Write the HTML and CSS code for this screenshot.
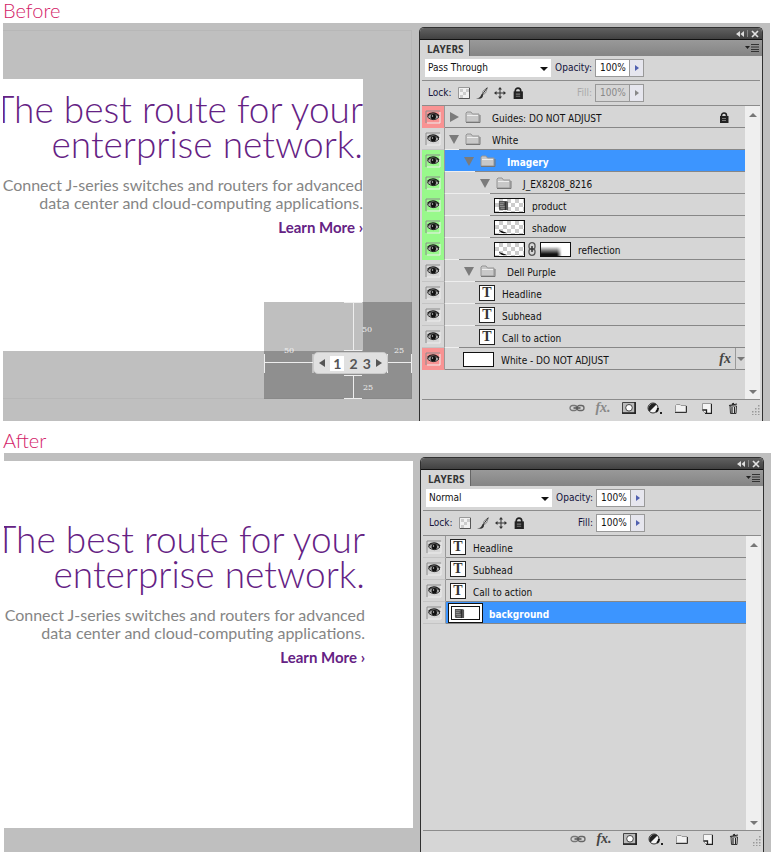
FILE: index.html
```html
<!DOCTYPE html>
<html lang="en">
<head>
<meta charset="utf-8">
<title>Layers: before and after</title>
<link rel="stylesheet" href="styles.css">
</head>
<body>
<svg class="sprite" aria-hidden="true">
  <symbol id="eye" viewBox="0 0 16 14"><path d="M1 13V1h14" fill="none" stroke="#8d8d8d"/><path d="M2 13h13V2" fill="none" stroke="#eee"/><path d="M2.500 7C4 3.500 10 2.500 14 7c-3 3.500-8 3.500-11.500 0z" fill="#aaa" stroke="#333"/><path d="M2.500 5.500C5 2 11 2 14 6" fill="none" stroke="#222" stroke-width="1.300"/><circle cx="8.300" cy="6.800" r="2.700" fill="#111"/><circle cx="7.500" cy="6" r=".7" fill="#ddd"/></symbol>
  <symbol id="folder" viewBox="0 0 16 12"><path d="M1 11V2l1-1h4l1.500 2H14v8z" fill="#c8c8c8" stroke="#959595"/><path d="M2 4.500h11" stroke="#eee"/><path d="M1 11.500h14V4" fill="none" stroke="#777"/></symbol>
  <symbol id="down" viewBox="0 0 10 10"><path d="M0 1h10L5 10z" fill="#7b7b7b"/></symbol>
  <symbol id="right" viewBox="0 0 10 10"><path d="M1 0v10l9-5z" fill="#7b7b7b"/></symbol>
  <symbol id="lock" viewBox="0 0 10 11"><path d="M2.500 5V3.500a2.500 2.500 0 0 1 5 0V5" fill="none" stroke="#222" stroke-width="1.500"/><rect x="1" y="4" width="8.500" height="7" fill="#222"/><path d="M3 6.500h4M3 8.500h4" stroke="#777"/></symbol>
  <symbol id="pixels" viewBox="0 0 12 12"><path d="M.5.5h11v11H.5z" fill="#f1f1f1" stroke="#999"/><path d="M2 2h3v3H2zM5 5h3v3H5zM8 2h3v3H8zM2 8h3v3H2z" fill="#ccc"/><path d="M1 11.500h10.500V1" fill="none" stroke="#555"/></symbol>
  <symbol id="brush" viewBox="0 0 12 12"><path d="M11.500.5 9.500 6 6 8.500 7 4z" fill="#eee" stroke="#777" stroke-width=".8"/><path d="M11 1 6 8" stroke="#333"/><path d="M6.500 7C5 7 5 9 4 10s-2 1-4 1c4 1.500 7 .5 7-2.500z" fill="#333"/></symbol>
  <symbol id="move" viewBox="0 0 12 12"><path d="M6 1v10M1 6h10" stroke="#333"/><path d="M6 0 4 2.500h4zM6 12 4 9.500h4zM0 6l2.500-2v4zM12 6 9.500 4v4z" fill="#333"/></symbol>
  <symbol id="link" viewBox="0 0 16 8"><rect x="1" y="1.500" width="7" height="5" rx="2.500" fill="none" stroke="#777" stroke-width="1.300"/><rect x="8" y="1.500" width="7" height="5" rx="2.500" fill="none" stroke="#666" stroke-width="1.300"/><path d="M4.500 4h7" stroke="#555" stroke-width="1.500"/></symbol>
  <symbol id="chain" viewBox="0 0 8 14"><rect x="1" y=".7" width="6" height="7" rx="3" fill="none" stroke="#555" stroke-width="1.300"/><rect x="1" y="6.300" width="6" height="7" rx="3" fill="none" stroke="#555" stroke-width="1.300"/><path d="M4 4v6" stroke="#333" stroke-width="1.500"/></symbol>
  <symbol id="mask" viewBox="0 0 14 12"><path d="M.5.5h13v11H.5z" fill="#bbb" stroke="#444"/><path d="M0 11h14M13 0v12" stroke="#222" stroke-width="1.500"/><circle cx="7" cy="5.800" r="3.300" fill="#fff" stroke="#444"/></symbol>
  <symbol id="adjust" viewBox="0 0 16 13"><circle cx="6" cy="6" r="5" fill="#f4f4f4" stroke="#333"/><path d="M2.500 9.500A5 5 0 0 1 9.500 2.500z" fill="#222"/><path d="M9 10a5 5 0 0 0 2-4" fill="none" stroke="#111" stroke-width="2"/><path d="M13 10h2v2h-2z" fill="#222"/></symbol>
  <symbol id="group" viewBox="0 0 12 9"><path d="M.5 8V1.500l1-1H5l1 1h5V8z" fill="#f1f1f1" stroke="#999"/><path d="M0 8.500h11.500V2" fill="none" stroke="#333"/></symbol>
  <symbol id="new" viewBox="0 0 10 11"><path d="M.5.500h9v10H3.500L.5 7.500z" fill="#f5f5f5" stroke="#999"/><path d="M3 10.500h6.500V1M.5 7h4v3" fill="none" stroke="#222" stroke-width="1.300"/></symbol>
  <symbol id="trash" viewBox="0 0 10 12"><path d="M2 4h6.500L8 11.500H2.500z" fill="#eee" stroke="#333"/><path d="M1 3.500 9 2M4 2l2-.8M4 5v6M6.500 5v6" fill="none" stroke="#222" stroke-width="1.200"/></symbol>
  <symbol id="grip" viewBox="0 0 10 10"><path d="M8 0h1.500v1.500H8zM8 3h1.500v1.500H8zM8 6h1.500v1.500H8zM8 9h1.500v1H8zM5 3h1.500v1.500H5zM5 6h1.500v1.500H5zM5 9h1.500v1H5zM2 6h1.500v1.500H2zM2 9h1.500v1H2z" fill="#999"/></symbol>
  <symbol id="collapse" viewBox="0 0 8 6"><path d="M4 0v6L0 3zM8 0v6L4.500 3z" fill="#ddd"/></symbol>
  <symbol id="close" viewBox="0 0 8 8"><path d="m1 1 6 6M7 1 1 7" stroke="#e2e2e2" stroke-width="1.700"/></symbol>
  <symbol id="menu" viewBox="0 0 14 8"><path d="M0 2h5L2.500 5z" fill="#222"/><path d="M6 .5h8M6 3h8M6 5.500h8M6 7.500h8" stroke="#333"/></symbol>
  <symbol id="device" viewBox="0 0 12 12"><path d="M1 1h8l2 1v9H2L1 10z" fill="#555"/><path d="M2 3h5M2 5h4M2 7h6M3 9h5" stroke="#999"/><path d="M8 2v9" stroke="#222"/></symbol>
  <symbol id="streak" viewBox="0 0 12 4"><path d="M1 0c2 1 6 2 8 3H4C3 2 1 1 1 0z" fill="#111"/></symbol>
</svg>

<section>
  <h2 class="caption">Before</h2>
  <div class="workspace">
    <div class="canvas">
      <div class="banner framed">
        <div class="ad inset">
          <h1>The best route for your<br>enterprise network.</h1>
          <p>Connect J-series switches and routers for advanced<br>data center and cloud-computing applications.</p>
          <a href="#more">Learn More ›</a>
        </div>
        <div class="spacing">
          <svg viewBox="0 0 148 97" aria-hidden="true">
            <path d="M80 .5h18M89.500 1v47M80 48.500h18M80 73.500h18M89.500 74v22M80 96.500h18M.5 52v19M1 60.500h48M49 52v19M123.500 52v19M124 60.500h23M147.500 52v19" fill="none" stroke="#eee"/>
            <text x="98" y="30">50</text><text x="20" y="51">50</text><text x="130" y="51">25</text><text x="99" y="88">25</text>
          </svg>
          <nav class="pager" aria-label="Slides"><a href="#prev" aria-label="Previous"><i class="prev"></i></a><a href="#1" class="current">1</a><a href="#2">2</a><a href="#3">3</a><a href="#next" aria-label="Next"><i class="next"></i></a></nav>
        </div>
      </div>
    </div>
    <div class="panel">
      <div class="titlebar"><button aria-label="Collapse"><svg class="i-collapse"><use href="#collapse"/></svg></button><i></i><button aria-label="Close"><svg class="i-close"><use href="#close"/></svg></button></div>
      <div class="tabs"><button class="tab">LAYERS</button><button class="plain" aria-label="Panel menu"><svg class="i-menu"><use href="#menu"/></svg></button></div>
      <div class="options">
        <div class="picker"><select aria-label="Blend mode"><option>Pass Through</option></select></div>
        <label for="o1">Opacity:</label>
        <span class="amount"><input id="o1" value="100%"><button aria-label="Opacity slider"><i class="next"></i></button></span>
      </div>
      <div class="options">
        <div class="locks"><span>Lock:</span><button aria-label="Lock transparency"><svg><use href="#pixels"/></svg></button><button aria-label="Lock pixels"><svg><use href="#brush"/></svg></button><button aria-label="Lock position"><svg><use href="#move"/></svg></button><button aria-label="Lock all"><svg><use href="#lock"/></svg></button></div>
        <label for="f1" class="off">Fill:</label>
        <span class="amount off"><input id="f1" value="100%" disabled><button aria-label="Fill slider" disabled><i class="next"></i></button></span>
      </div>
      <div class="body">
        <ul class="layers">
          <li class="red"><button class="eye" aria-label="Visibility"><svg><use href="#eye"/></svg></button><div class="row d0"><svg class="tri"><use href="#right"/></svg><svg class="folder"><use href="#folder"/></svg><span>Guides: DO NOT ADJUST</span><svg class="locked"><use href="#lock"/></svg></div></li>
          <li><button class="eye" aria-label="Visibility"><svg><use href="#eye"/></svg></button><div class="row d0 r1"><svg class="tri"><use href="#down"/></svg><svg class="folder"><use href="#folder"/></svg><span>White</span></div></li>
          <li class="green"><button class="eye" aria-label="Visibility"><svg><use href="#eye"/></svg></button><div class="row d1 r2 selected"><svg class="tri"><use href="#down"/></svg><svg class="folder"><use href="#folder"/></svg><span>Imagery</span></div></li>
          <li class="green"><button class="eye" aria-label="Visibility"><svg><use href="#eye"/></svg></button><div class="row d2 r3"><svg class="tri"><use href="#down"/></svg><svg class="folder"><use href="#folder"/></svg><span>J_EX8208_8216</span></div></li>
          <li class="green"><button class="eye" aria-label="Visibility"><svg><use href="#eye"/></svg></button><div class="row d3 r3"><i class="thumb checks"><svg class="device"><use href="#device"/></svg></i><span>product</span></div></li>
          <li class="green"><button class="eye" aria-label="Visibility"><svg><use href="#eye"/></svg></button><div class="row d3 r3"><i class="thumb checks low"><svg class="streak"><use href="#streak"/></svg></i><span>shadow</span></div></li>
          <li class="green"><button class="eye" aria-label="Visibility"><svg><use href="#eye"/></svg></button><div class="row d3 r1"><i class="thumb checks low"><svg class="streak"><use href="#streak"/></svg></i><svg class="chain"><use href="#chain"/></svg><i class="thumb fade"></i><span>reflection</span></div></li>
          <li><button class="eye" aria-label="Visibility"><svg><use href="#eye"/></svg></button><div class="row d1 r2"><svg class="tri"><use href="#down"/></svg><svg class="folder"><use href="#folder"/></svg><span>Dell Purple</span></div></li>
          <li><button class="eye" aria-label="Visibility"><svg><use href="#eye"/></svg></button><div class="row dt r2"><b class="type">T</b><span>Headline</span></div></li>
          <li><button class="eye" aria-label="Visibility"><svg><use href="#eye"/></svg></button><div class="row dt r2"><b class="type">T</b><span>Subhead</span></div></li>
          <li><button class="eye" aria-label="Visibility"><svg><use href="#eye"/></svg></button><div class="row dt r1"><b class="type">T</b><span>Call to action</span></div></li>
          <li class="red"><button class="eye" aria-label="Visibility"><svg><use href="#eye"/></svg></button><div class="row dw"><i class="thumb"></i><span>White - DO NOT ADJUST</span><em class="fx">fx</em><button class="more" aria-label="Show effects"><i class="drop"></i></button></div></li>
        </ul>
        <div class="scroll"><i class="up"></i><i class="drop"></i></div>
      </div>
      <div class="actions"><button aria-label="Link layers"><svg class="i-link"><use href="#link"/></svg></button><button class="fx dim" aria-label="Layer style">fx.</button><button aria-label="Add mask"><svg class="i-mask"><use href="#mask"/></svg></button><button aria-label="Adjustment layer"><svg class="i-adjust"><use href="#adjust"/></svg></button><button aria-label="New group"><svg class="i-group"><use href="#group"/></svg></button><button aria-label="New layer"><svg class="i-new"><use href="#new"/></svg></button><button aria-label="Delete layer"><svg class="i-trash"><use href="#trash"/></svg></button><svg class="i-grip"><use href="#grip"/></svg></div>
    </div>
  </div>
</section>

<section>
  <h2 class="caption second">After</h2>
  <div class="workspace shifted">
    <div class="canvas">
      <div class="banner">
        <div class="ad">
          <h1>The best route for your<br>enterprise network.</h1>
          <p>Connect J-series switches and routers for advanced<br>data center and cloud-computing applications.</p>
          <a href="#more">Learn More ›</a>
        </div>
      </div>
    </div>
    <div class="panel">
      <div class="titlebar"><button aria-label="Collapse"><svg class="i-collapse"><use href="#collapse"/></svg></button><i></i><button aria-label="Close"><svg class="i-close"><use href="#close"/></svg></button></div>
      <div class="tabs"><button class="tab">LAYERS</button><button class="plain" aria-label="Panel menu"><svg class="i-menu"><use href="#menu"/></svg></button></div>
      <div class="options">
        <div class="picker"><select aria-label="Blend mode"><option>Normal</option></select></div>
        <label for="o2">Opacity:</label>
        <span class="amount"><input id="o2" value="100%"><button aria-label="Opacity slider"><i class="next"></i></button></span>
      </div>
      <div class="options">
        <div class="locks"><span>Lock:</span><button aria-label="Lock transparency"><svg><use href="#pixels"/></svg></button><button aria-label="Lock pixels"><svg><use href="#brush"/></svg></button><button aria-label="Lock position"><svg><use href="#move"/></svg></button><button aria-label="Lock all"><svg><use href="#lock"/></svg></button></div>
        <label for="f2">Fill:</label>
        <span class="amount"><input id="f2" value="100%"><button aria-label="Fill slider"><i class="next"></i></button></span>
      </div>
      <div class="body">
        <ul class="layers">
          <li><button class="eye" aria-label="Visibility"><svg><use href="#eye"/></svg></button><div class="row d0"><b class="type">T</b><span>Headline</span></div></li>
          <li><button class="eye" aria-label="Visibility"><svg><use href="#eye"/></svg></button><div class="row d0"><b class="type">T</b><span>Subhead</span></div></li>
          <li><button class="eye" aria-label="Visibility"><svg><use href="#eye"/></svg></button><div class="row d0"><b class="type">T</b><span>Call to action</span></div></li>
          <li><button class="eye" aria-label="Visibility"><svg><use href="#eye"/></svg></button><div class="row framed-thumb selected"><i class="thumb active"><svg class="device"><use href="#device"/></svg></i><span>background</span></div></li>
        </ul>
        <div class="scroll"><i class="up"></i><i class="drop"></i></div>
      </div>
      <div class="actions"><button aria-label="Link layers"><svg class="i-link"><use href="#link"/></svg></button><button class="fx" aria-label="Layer style">fx.</button><button aria-label="Add mask"><svg class="i-mask"><use href="#mask"/></svg></button><button aria-label="Adjustment layer"><svg class="i-adjust"><use href="#adjust"/></svg></button><button aria-label="New group"><svg class="i-group"><use href="#group"/></svg></button><button aria-label="New layer"><svg class="i-new"><use href="#new"/></svg></button><button aria-label="Delete layer"><svg class="i-trash"><use href="#trash"/></svg></button><svg class="i-grip"><use href="#grip"/></svg></div>
    </div>
  </div>
</section>
</body>
</html>
```
FILE: styles.css
```css
* { box-sizing: border-box; }
body { margin: 0; background: #fff; color: #111; font: 10px/14px "DejaVu Sans Condensed", "DejaVu Sans", sans-serif; }
button, input, select { font: inherit; color: inherit; margin: 0; padding: 0; border: 0; background: none; border-radius: 0; }
button { display: flex; align-items: center; justify-content: center; }
svg { display: block; flex: none; }
.sprite { position: absolute; width: 0; height: 0; }

.caption { margin: 0; padding-left: 3px; color: #d31c68; font: 300 20px/21px Lato, sans-serif; height: 23px; }
.caption.second { padding-top: 9px; height: 32px; }

/* workspace */
.workspace { display: grid; grid-template-columns: minmax(0, 416fr) minmax(0, 344fr); min-height: 398px; margin: 0 3px; padding-right: 7px; background: #bfbfbf; }
.workspace.shifted { margin: 0 2px 0 4px; min-height: 399px; }
.canvas { display: flex; padding: 7px 7px 22px 0; }
.shifted .canvas { padding: 8px 7px 24px 0; }
.banner { position: relative; flex: 1; min-width: 0; background: #fff; }
.banner.framed { background: none; border: 1px solid #b7b7b7; border-left: 0; padding: 48px 48px 47px 0; display: flex; }
.ad { display: flex; flex-direction: column; align-items: flex-end; flex: 1; min-width: 0; overflow: hidden; background: #fff; text-align: right; white-space: nowrap; padding-top: 12px; }
.shifted .ad { padding: 60px 48px 0 0; background: none; }
.ad h1 { margin: 0; color: #652284; font: 300 37px/35px Lato, sans-serif; }
.ad p { margin: 15px 0 0; color: #858585; font: 400 16px/18px Lato, sans-serif; }
.ad a { margin-top: 6px; color: #652284; font: 700 15px/18px Lato, sans-serif; text-decoration: none; }

/* spacing overlay on the banner's corner */
.spacing { position: absolute; right: -1px; bottom: -1px; width: 148px; height: 97px; background: rgba(0, 0, 0, .25); }
.spacing text { fill: #f0f0f0; font: 8px "DejaVu Serif", serif; }
.pager { position: absolute; left: 49px; top: 50px; width: 75px; height: 22px; display: flex; align-items: center; justify-content: space-between; padding: 0 5px; background: #e0e0e0; border: 1px solid #cacaca; border-radius: 5px; }
.pager a { color: #555; font: 700 14px/15px Lato, sans-serif; text-decoration: none; }
.pager .current { background: #fff; padding: 0 3px; }
.prev { display: block; border: 4px solid transparent; border-right: 6px solid #555; border-left: 0; }
.next { display: block; border: 4px solid transparent; border-left: 6px solid #555; border-right: 0; }
.up { border: 4px solid transparent; border-bottom: 4px solid #777; border-top: 0; }
.drop { border: 4px solid transparent; border-top: 4px solid #777; border-bottom: 0; }

/* panel */
.panel { display: flex; flex-direction: column; margin-top: 4px; padding: 0 2px; background: #d6d6d6; border: solid #303030; border-width: 1px 1px 0; border-radius: 5px 5px 0 0; overflow: hidden; }
.titlebar { display: flex; align-items: center; justify-content: flex-end; gap: 3px; height: 12px; margin: 0 -2px; padding-right: 3px; background: linear-gradient(#606060, #414141); border-bottom: 1px solid #111; }
.titlebar i { width: 1px; height: 7px; background: #888; }
.i-collapse { width: 8px; height: 6px; }
.i-close { width: 8px; height: 8px; }
.tabs { display: flex; justify-content: space-between; height: 16px; margin: 0 -2px; padding-right: 3px; background: linear-gradient(#999, #848484); }
.tab { padding: 2px 5px 0 7px; background: #d6d6d6; border-right: 1px solid #666; color: #333; font: 700 10px/14px "Open Sans", sans-serif; }
.i-menu { width: 14px; height: 8px; }
.options { display: grid; grid-template-columns: 126px 41px 52px; height: 25px; align-items: center; padding-left: 3px; border-bottom: 1px solid #8c8c8c; }
.picker { position: relative; }
.picker::after { content: ""; position: absolute; right: 3px; top: 8px; border: 4px solid transparent; border-top-color: #111; border-bottom: 0; pointer-events: none; }
select { display: block; appearance: none; width: 100%; height: 18px; padding: 0 3px; background: #fff; }
.options label { text-align: right; color: #14143c; }
.options label.off { color: #aaa; }
.amount { display: flex; height: 18px; margin-left: 3px; border: 1px solid #999; background: #fff; }
.amount input { flex: 1; width: 0; min-width: 0; padding-left: 4px; }
.amount button { width: 14px; background: #e6e6ee; border-left: 1px solid #999; }
.amount .next { border-width: 3px 0 3px 4px; border-left-color: #5060b0; }
.amount.off { background: #d6d6d6; color: #888; }
.amount.off .next { border-left-color: #888; }
.locks { display: flex; align-items: center; gap: 6px; padding-left: 3px; color: #14143c; }
.locks svg { width: 12px; height: 12px; }

.body { display: flex; flex: 1; border-bottom: 1px solid #8c8c8c; }
.layers { flex: 1; min-width: 0; margin: 0; padding: 0; list-style: none; }
.layers li { display: flex; height: 22px; }
.eye { width: 23px; border-right: 1px solid #999; border-bottom: 1px solid #c4c4c4; }
.eye svg { width: 16px; height: 14px; }
.red .eye { background: #f99393; border-bottom-color: #f99393; }
.green .eye { background: #98f98b; border-bottom-color: #98f98b; }
.row { --start: 0px; display: flex; flex: 1; align-items: center; min-width: 0; background: linear-gradient(#878787, #878787) right bottom / calc(100% - var(--start)) 1px no-repeat, linear-gradient(#eee, #eee) left bottom / 100% 1px no-repeat; }
.r1 { --start: 14px; }
.r2 { --start: 30px; }
.r3 { --start: 45px; }
.row.selected { background-color: #3c95ff; color: #fff; font-weight: 700; }
.d0 { padding-left: 4px; }
.d1 { padding-left: 19px; }
.d2 { padding-left: 35px; }
.d3 { padding-left: 49px; }
.dt { padding-left: 34px; }
.dw { padding-left: 18px; }
.framed-thumb { padding-left: 3px; }
.tri { width: 10px; height: 10px; }
.folder { width: 16px; height: 12px; margin: 0 4px 0 6px; }
.row span { margin: 3px 0 0 7px; white-space: nowrap; }
.locked { width: 10px; height: 11px; margin: 0 16px 0 auto; }
.type { width: 16px; height: 16px; border: 1px solid #222; background: #fff; color: #333; font: 700 14px/14px "Liberation Serif", serif; text-align: center; }
.thumb { display: flex; align-items: center; width: 31px; height: 15px; padding-left: 3px; border: 1px solid #111; background: #fff; }
.checks { background: repeating-conic-gradient(#ccc 0 25%, #fff 0 50%) 0 0 / 8px 8px; }
.low { align-items: flex-end; }
.device { width: 11px; height: 11px; }
.streak { width: 12px; height: 4px; }
.chain { width: 8px; height: 14px; margin: 0 4px 0 3px; }
.fade { background: linear-gradient(90deg, transparent 55%, #fff 72%), linear-gradient(#fff 25%, #111 85%); }
.active { width: 33px; height: 18px; outline: 1px solid #111; outline-offset: -3px; border: 2px solid #fff; box-shadow: 0 0 0 1px #111; }
.fx { color: #444; font: italic 700 14px/14px "Liberation Serif", serif; }
.row .fx { margin-left: auto; }
.more { width: 10px; height: 100%; margin-left: 4px; border-left: 1px solid #999; }
.scroll { display: flex; flex-direction: column; justify-content: space-between; align-items: center; width: 15px; padding: 7px 0 5px; background: #efefef; }
.actions { display: flex; align-items: center; justify-content: flex-end; height: 21px; padding-bottom: 5px; }
.actions button { width: 26px; }
.actions .dim { color: #888; }
.i-link { width: 16px; height: 8px; }
.i-mask { width: 14px; height: 12px; }
.i-adjust { width: 16px; height: 13px; }
.i-group { width: 12px; height: 9px; }
.i-new { width: 10px; height: 11px; }
.i-trash { width: 10px; height: 12px; }
.i-grip { width: 10px; height: 10px; margin: 4px 0 0 4px; }
```
